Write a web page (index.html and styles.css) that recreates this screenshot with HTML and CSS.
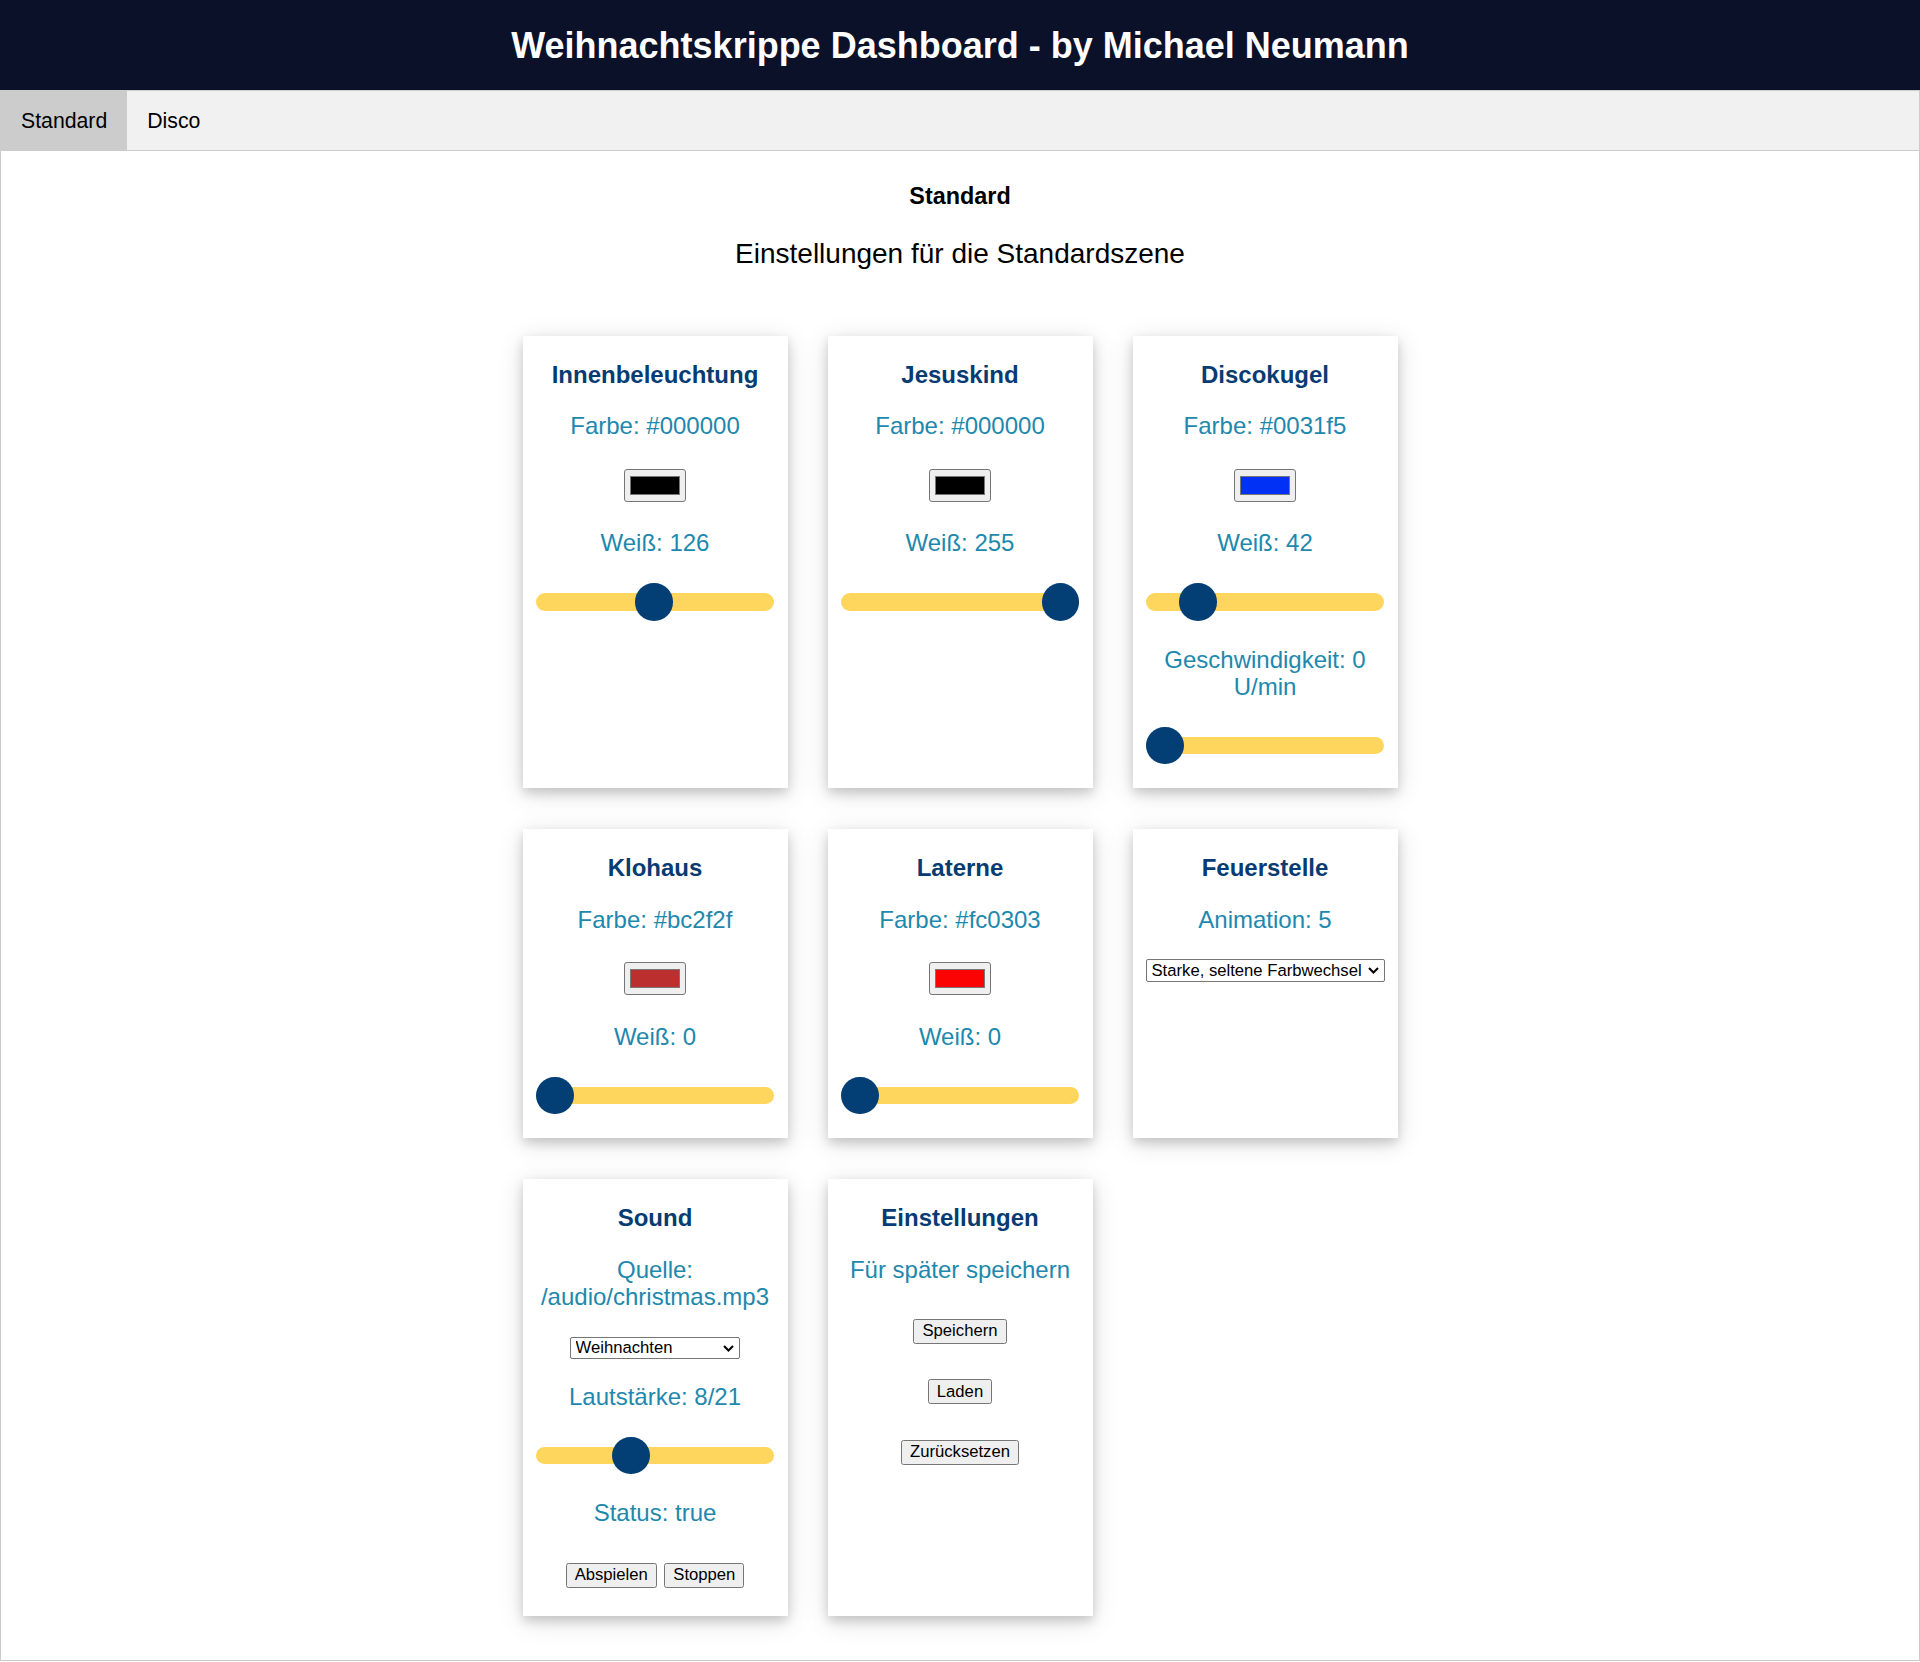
FILE: index.html
```html
<!DOCTYPE html>
<html lang="de">
<head>
<meta charset="utf-8">
<title>Weihnachtskrippe Dashboard</title>
<link rel="stylesheet" href="styles.css">
</head>
<body>
<header class="topbar">
  <h1 class="topbar-title">Weihnachtskrippe Dashboard - by Michael Neumann</h1>
</header>
<nav class="tabs">
  <button class="tab active">Standard</button>
  <button class="tab">Disco</button>
</nav>
<main class="tabcontent">
  <h3 class="scene-title">Standard</h3>
  <p class="scene-desc">Einstellungen für die Standardszene</p>
  <div class="cards">
    <section class="card">
      <h3 class="card-title">Innenbeleuchtung</h3>
      <p class="val">Farbe: #000000</p>
      <input class="swatch" type="color" value="#000000">
      <p class="val">Weiß: 126</p>
      <div class="range-wrap"><input class="range" type="range" min="0" max="255" value="126"></div>
    </section>
    <section class="card">
      <h3 class="card-title">Jesuskind</h3>
      <p class="val">Farbe: #000000</p>
      <input class="swatch" type="color" value="#000000">
      <p class="val">Weiß: 255</p>
      <div class="range-wrap"><input class="range" type="range" min="0" max="255" value="255"></div>
    </section>
    <section class="card">
      <h3 class="card-title">Discokugel</h3>
      <p class="val">Farbe: #0031f5</p>
      <input class="swatch" type="color" value="#0031f5">
      <p class="val">Weiß: 42</p>
      <div class="range-wrap"><input class="range" type="range" min="0" max="255" value="42"></div>
      <p class="val">Geschwindigkeit: 0 U/min</p>
      <div class="range-wrap"><input class="range" type="range" min="0" max="100" value="0"></div>
    </section>
    <section class="card">
      <h3 class="card-title">Klohaus</h3>
      <p class="val">Farbe: #bc2f2f</p>
      <input class="swatch" type="color" value="#bc2f2f">
      <p class="val">Weiß: 0</p>
      <div class="range-wrap"><input class="range" type="range" min="0" max="255" value="0"></div>
    </section>
    <section class="card">
      <h3 class="card-title">Laterne</h3>
      <p class="val">Farbe: #fc0303</p>
      <input class="swatch" type="color" value="#fc0303">
      <p class="val">Weiß: 0</p>
      <div class="range-wrap"><input class="range" type="range" min="0" max="255" value="0"></div>
    </section>
    <section class="card">
      <h3 class="card-title">Feuerstelle</h3>
      <p class="val">Animation: 5</p>
      <div class="pick-wrap pick-wide">
        <select class="pick">
          <option>Starke, seltene Farbwechsel</option>
        </select>
        <svg class="chev" viewBox="0 0 11 7" width="11" height="7"><path d="M1 1 L5.5 5.5 L10 1" fill="none" stroke="#000" stroke-width="2"/></svg>
      </div>
    </section>
    <section class="card">
      <h3 class="card-title">Sound</h3>
      <p class="val">Quelle: /audio/christmas.mp3</p>
      <div class="pick-wrap pick-narrow">
        <select class="pick">
          <option>Weihnachten</option>
        </select>
        <svg class="chev" viewBox="0 0 11 7" width="11" height="7"><path d="M1 1 L5.5 5.5 L10 1" fill="none" stroke="#000" stroke-width="2"/></svg>
      </div>
      <p class="val">Lautstärke: 8/21</p>
      <div class="range-wrap"><input class="range" type="range" min="0" max="21" value="8"></div>
      <p class="val">Status: true</p>
      <div class="btn-row">
        <button class="btn">Abspielen</button>
        <button class="btn">Stoppen</button>
      </div>
    </section>
    <section class="card">
      <h3 class="card-title">Einstellungen</h3>
      <p class="val">Für später speichern</p>
      <div class="btn-row"><button class="btn">Speichern</button></div>
      <div class="btn-row"><button class="btn">Laden</button></div>
      <div class="btn-row"><button class="btn">Zurücksetzen</button></div>
    </section>
  </div>
</main>
</body>
</html>
```
FILE: styles.css
```css
html, body {
  margin: 0;
  padding: 0;
  background: #ffffff;
}

body {
  font-family: "Liberation Sans", Arial, sans-serif;
  color: #000000;
}

.topbar {
  height: 90px;
  background: #0b1129;
  display: flex;
  align-items: center;
  justify-content: center;
}

.topbar-title {
  margin: 0;
  color: #ffffff;
  font-size: 36px;
  font-weight: bold;
  line-height: 41px;
}

.tabs {
  display: flex;
  border: 1px solid #cccccc;
  background: #f1f1f1;
}

.tab {
  font-family: "Liberation Sans", Arial, sans-serif;
  font-size: 21.25px;
  line-height: 24.4px;
  padding: 17.5px 20px;
  border: none;
  background: inherit;
  color: #000000;
  margin: 0;
}

.tab.active {
  background: #cccccc;
}

.tabcontent {
  border: 1px solid #cccccc;
  border-top: none;
  padding: 8px 15px 7px;
  text-align: center;
}

.scene-title {
  font-size: 23.4px;
  line-height: 27px;
  font-weight: bold;
  margin: 23.4px 0 0;
}

.scene-desc {
  font-size: 28px;
  line-height: 32px;
  margin: 28px 0 0;
}

.cards {
  display: grid;
  grid-template-columns: repeat(3, 265px);
  column-gap: 40px;
  row-gap: 41px;
  justify-content: center;
  margin: 66px 0 37px;
}

.card {
  box-sizing: border-box;
  background: #ffffff;
  padding: 0 13.5px 24px 13.5px;
  box-shadow: 0 5px 10px 0 rgba(0, 0, 0, 0.16), 0 5px 25px 0 rgba(0, 0, 0, 0.13);
  text-align: center;
}

.card-title {
  margin: 25px 0 0;
  font-size: 24px;
  line-height: 27.6px;
  font-weight: bold;
  color: #073b72;
}

.val {
  margin: 24px 0 0;
  font-size: 24px;
  line-height: 27.6px;
  color: #1e88ad;
}

.swatch {
  display: block;
  box-sizing: border-box;
  width: 62px;
  height: 33px;
  margin: 29px auto 0;
  padding: 0;
  border: 1px solid #767676;
  border-radius: 3px;
  background: #efefef;
}

.swatch::-webkit-color-swatch-wrapper {
  padding: 6px 5px;
}

.swatch::-webkit-color-swatch {
  border: 1px solid #777777;
  border-radius: 0;
}

.swatch + .val {
  margin-top: 27.5px;
}

.range-wrap {
  height: 37.5px;
  margin-top: 26px;
  display: flex;
  align-items: center;
}

.range-wrap + .val {
  margin-top: 25px;
}

.range {
  -webkit-appearance: none;
  appearance: none;
  width: 100%;
  height: 17.5px;
  margin: 0;
  border-radius: 9px;
  background: #fed65d;
  outline: none;
}

.range::-webkit-slider-thumb {
  -webkit-appearance: none;
  appearance: none;
  width: 37.5px;
  height: 37.5px;
  border-radius: 50%;
  background: #033e75;
  border: none;
}

.pick-wrap {
  position: relative;
  height: 22.5px;
  margin: 26px auto 0;
}

.pick {
  -webkit-appearance: none;
  appearance: none;
  display: block;
  box-sizing: border-box;
  width: 100%;
  height: 22.5px;
  margin: 0;
  padding: 0 20px 0 4.5px;
  font-family: "Liberation Sans", Arial, sans-serif;
  font-size: 16.67px;
  line-height: 20px;
  color: #000000;
  background: #ffffff;
  border: 1px solid #767676;
  border-radius: 2px;
  text-align: left;
}

.chev {
  position: absolute;
  right: 6px;
  top: 8px;
  pointer-events: none;
}

.pick-wide {
  width: 239px;
}

.pick-narrow {
  width: 170px;
}

.pick-wrap + .val {
  margin-top: 24px;
}

.btn-row {
  display: flex;
  justify-content: center;
  gap: 7.5px;
  margin: 35.5px 0 4.5px;
}

.btn {
  box-sizing: border-box;
  height: 25px;
  padding: 0 8px;
  font-family: "Liberation Sans", Arial, sans-serif;
  font-size: 16.67px;
  color: #000000;
  background: #efefef;
  border: 1px solid #767676;
  border-radius: 2.5px;
}
```
